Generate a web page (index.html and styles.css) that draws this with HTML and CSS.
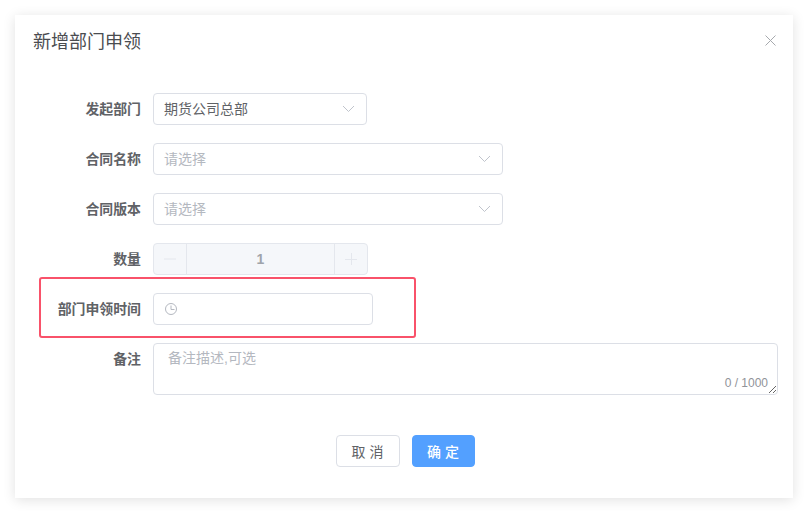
FILE: index.html
```html
<!DOCTYPE html>
<html lang="zh">
<head>
<meta charset="utf-8">
<title>新增部门申领</title>
<link rel="stylesheet" href="styles.css">
</head>
<body>
<div class="dialog">
  <header class="dialog-header">
    <h1 class="dialog-title">新增部门申领</h1>
    <svg class="close-icon" width="11" height="11" viewBox="0 0 11 11"><path d="M.5.5l10 10M10.5.5l-10 10" fill="none" stroke="#a6a9ad" stroke-width="1"/></svg>
  </header>
  <form class="form">
    <div class="row">
      <label class="label">发起部门</label>
      <div class="control select select-short"><span class="value">期货公司总部</span>
        <svg class="chevron" width="13" height="8" viewBox="0 0 13 8"><path d="M1 1l5.5 5.5L12 1" fill="none" stroke="#c0c4cc"/></svg>
      </div>
    </div>
    <div class="row">
      <label class="label">合同名称</label>
      <div class="control select select-long"><span class="placeholder">请选择</span>
        <svg class="chevron" width="13" height="8" viewBox="0 0 13 8"><path d="M1 1l5.5 5.5L12 1" fill="none" stroke="#c0c4cc"/></svg>
      </div>
    </div>
    <div class="row">
      <label class="label">合同版本</label>
      <div class="control select select-long"><span class="placeholder">请选择</span>
        <svg class="chevron" width="13" height="8" viewBox="0 0 13 8"><path d="M1 1l5.5 5.5L12 1" fill="none" stroke="#c0c4cc"/></svg>
      </div>
    </div>
    <div class="row">
      <label class="label">数量</label>
      <div class="control number">
        <span class="step step-minus"><svg width="12" height="12" viewBox="0 0 12 12"><path d="M0 6h12" stroke="#e4e7ed"/></svg></span>
        <span class="number-value">1</span>
        <span class="step step-plus"><svg width="12" height="12" viewBox="0 0 12 12"><path d="M0 6.5h12M6.5 0v12" stroke="#e4e7ed"/></svg></span>
      </div>
    </div>
    <div class="row">
      <label class="label">部门申领时间</label>
      <div class="control date">
        <svg width="14" height="14" viewBox="0 0 14 14"><circle cx="7" cy="7" r="5.5" fill="none" stroke="#b4b8c0"/><path d="M7 3.5V7.5H10.5" fill="none" stroke="#b4b8c0"/></svg>
      </div>
      <div class="highlight"></div>
    </div>
    <div class="row row-note">
      <label class="label">备注</label>
      <div class="note">
        <textarea class="note-input" placeholder="备注描述,可选"></textarea>
        <span class="counter">0 / 1000</span>
      </div>
    </div>
    <div class="actions">
      <button type="button" class="btn btn-cancel">取 消</button>
      <button type="button" class="btn btn-ok">确 定</button>
    </div>
  </form>
</div>
</body>
</html>
```
FILE: styles.css
```css
* { box-sizing: border-box; }
html, body { margin: 0; height: 100%; background: #fff; }
body {
  padding: 15px;
  font-family: "Liberation Sans", "Noto Sans CJK SC", sans-serif;
  font-size: 14px;
  color: #606266;
  overflow: hidden;
}
.dialog {
  width: 778px;
  height: 483px;
  background: #fff;
  box-shadow: 0 2px 12px rgba(0, 0, 0, 0.12);
}
.dialog-header {
  height: 50px;
  padding: 0 18px;
  display: flex;
  align-items: center;
  justify-content: space-between;
}
.dialog-title {
  margin: 0;
  font-size: 18px;
  font-weight: 400;
  color: #4a4c50;
}
.close-icon { margin-right: -1px; }
.form { padding-top: 28px; }
.row {
  position: relative;
  display: flex;
  align-items: center;
  height: 32px;
  margin-bottom: 18px;
}
.label {
  width: 126px;
  margin-right: 12px;
  padding-bottom: 2px;
  text-align: right;
  font-size: 13.9px;
  font-weight: 700;
  color: #606266;
}
.control {
  height: 32px;
  border: 1px solid #dcdfe6;
  border-radius: 4px;
  background: #fff;
  display: flex;
  align-items: center;
}
.select { padding: 0 10px; justify-content: space-between; }
.select-short { width: 214px; }
.select-long { width: 350px; }
.placeholder { color: #b4b8c0; padding-bottom: 2px; }
.value { color: #606266; padding-bottom: 2px; }
.chevron { margin-right: 1px; margin-bottom: 1px; }
.number {
  width: 215px;
  background: #f5f7fa;
  border-color: #e4e7ed;
}
.step {
  width: 33px;
  height: 100%;
  display: flex;
  align-items: center;
  justify-content: center;
}
.step-minus { border-right: 1px solid #e4e7ed; }
.step-plus { border-left: 1px solid #e4e7ed; }
.number-value {
  flex: 1;
  text-align: center;
  color: #a0a4ab;
  font-weight: 700;
}
.date { width: 220px; padding-left: 10px; }
.highlight {
  position: absolute;
  left: 24px;
  top: -16px;
  width: 377px;
  height: 61px;
  border: 2px solid #f9526a;
  border-radius: 3px;
  pointer-events: none;
}
.row-note { align-items: flex-start; height: 52px; margin-bottom: 40px; }
.row-note .label { line-height: 32px; }
.note { position: relative; width: 625px; height: 52px; }
.note-input {
  display: block;
  width: 100%;
  height: 100%;
  padding: 4px 14px;
  border: 1px solid #dcdfe6;
  border-radius: 4px;
  font: inherit;
  line-height: 20px;
  color: #606266;
  outline: none;
  resize: vertical;
}
.note-input::placeholder { color: #b4b8c0; opacity: 1; }
.counter {
  position: absolute;
  right: 10px;
  bottom: 5px;
  font-size: 12px;
  font-weight: 400;
  line-height: 14px;
  color: #909399;
}
.actions {
  display: flex;
  justify-content: center;
  gap: 12px;
  padding-left: 2px;
}
.btn {
  width: 64px;
  height: 32px;
  padding: 0;
  border-radius: 4px;
  font: inherit;
  font-size: 14px;
}
.btn-cancel { background: #fff; border: 1px solid #dcdfe6; color: #606266; }
.btn-ok { width: 63px; background: #53a0ff; border: 1px solid #53a0ff; color: #fff; font-weight: 500; }
```
